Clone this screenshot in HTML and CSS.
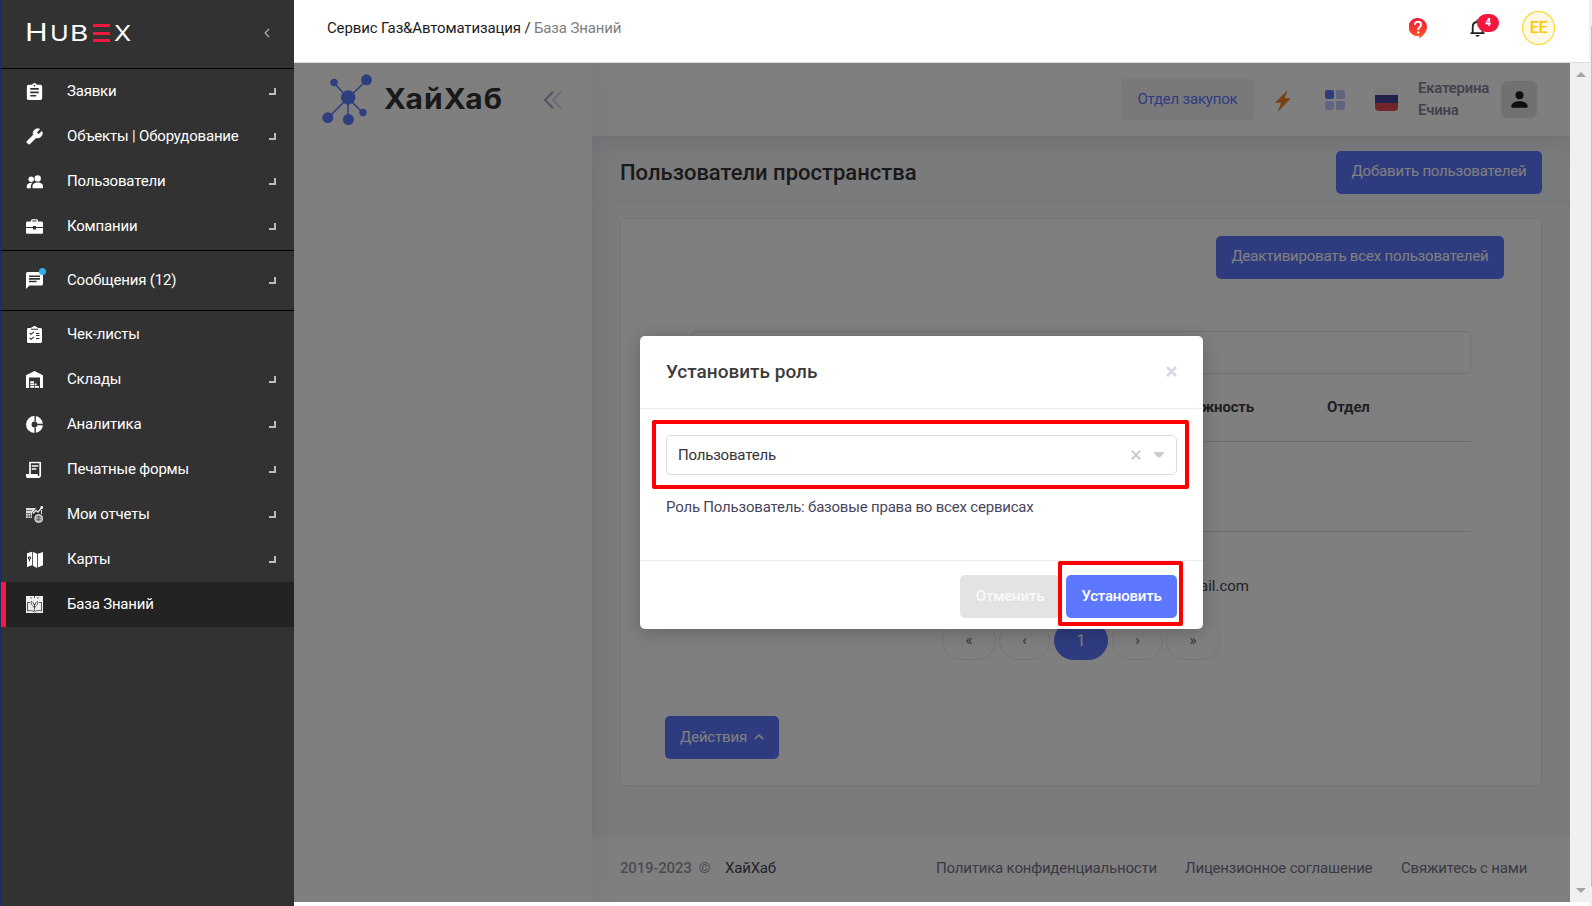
FILE: index.html
```html
<!DOCTYPE html>
<html lang="ru">
<head>
<meta charset="utf-8">
<title>База Знаний</title>
<link rel="stylesheet" href="styles.css">
</head>
<body>
<div class="app">
  <nav class="side">
    <div class="side-head">
      <div class="logo"><span class="logo-h">H</span><span class="logo-u">U</span><span class="logo-b">B</span><i class="logo-e"></i><span class="logo-x">X</span></div>
      <svg class="collapse" viewBox="0 0 6 10"><path d="M5 1L1.2 5L5 9" fill="none" stroke="#aaa" stroke-width="1.3"/></svg>
    </div>
    <div class="group">
      <a class="item"><svg class="ico" viewBox="3 1 18 20"><path fill="#fff" fill-rule="evenodd" d="M19 3h-4.2a3 3 0 0 0-5.6 0H5a2 2 0 0 0-2 2v14c0 1.100.9 2 2 2h14a2 2 0 0 0 2-2V5a2 2 0 0 0-2-2zm-7 0a1 1 0 1 1 0 2 1 1 0 0 1 0-2zm2 14H7v-2h7zm3-4H7v-2h10zm0-4H7V7h10z"/></svg><span>Заявки</span><i class="corner"></i></a>
      <a class="item"><svg class="ico" viewBox="0 1 24 22"><path fill="#fff" stroke="#fff" transform="matrix(-1 0 0 1 24 0)" d="M22.700 19l-9.100-9.100c.9-2.300.4-5-1.500-6.900-2-2-5-2.400-7.400-1.300L9 6 6 9 1.600 4.700C.4 7.100.9 10.100 2.900 12.100c1.900 1.900 4.600 2.400 6.900 1.500l9.100 9.100c.4.4 1 .4 1.400 0l2.300-2.300c.5-.4.5-1.100.1-1.400z"/></svg><span>Объекты | Оборудование</span><i class="corner"></i></a>
      <a class="item"><svg class="ico" viewBox="0 0 17 17"><g fill="#fff"><circle cx="11.700" cy="5.400" r="3.200"/><circle cx="5.200" cy="6.200" r="2.700"/><path d="M6.500 15.200v-2c0-2.500 2.500-3.700 5.200-3.700s5.300 1.200 5.300 3.700v2zM.8 15.200v-2.100c0-2.200 2-3.300 4.500-3.400h1.300c-1.300 1-1.800 2.300-1.800 3.800v1.700z"/></g></svg><span>Пользователи</span><i class="corner"></i></a>
      <a class="item"><svg class="ico" viewBox="0 0 17 17"><path fill="#fff" d="M5 3.500V2.200L6 1.200h5l1 1v1.300h4l1 1V9h-7V8H7v1H0V4.500l1-1zm1.300 0h4.400v-1H6.300zM0 10h7v1.500h3V10h7v5l-.8.800H.8L0 15z"/></svg><span>Компании</span><i class="corner"></i></a>
    </div>
    <div class="group message">
      <a class="item"><span class="ico-wrap"><svg class="ico" viewBox="2 2 20 20"><path fill="#fff" fill-rule="evenodd" d="M20 2H4a2 2 0 0 0-2 2v18l4-4h14a2 2 0 0 0 2-2V4a2 2 0 0 0-2-2zM5.500 6h13v1.800h-13zm0 3.200h13V11h-13zm0 3.200h9v1.800h-9z"/></svg><i class="dot"></i></span><span>Сообщения (12)</span><i class="corner"></i></a>
    </div>
    <div class="group last">
      <a class="item"><svg class="ico" viewBox="0 0 17 17"><path fill="#fff" d="M2 2h3.500V.9h1.300L7.500 0h2l.7.9h1.300V2H15l1 1v13l-1 1H2l-1-1V3z"/><path fill="none" stroke="#323232" stroke-width="1.100" d="M5 3.300h7M3.700 7l1.400 1.300L8 5.800M3.700 12l1.400 1.300L8 10.800M10 7.500h3.500M10 9.500h3.500M10 12.500h3.500"/></svg><span>Чек-листы</span></a>
      <a class="item"><svg class="ico" viewBox="0 0 17 17"><path fill="#fff" d="M0 17V4.300L8.500 0 17 4.300V17h-3V6.500H3V17z"/><path fill="#fff" d="M4.200 10.200H8v1.800H4.200zM4.200 12.600H8v1.700H4.200zM8.600 12.600h2v1.700h-2zM4.200 15H8v1.800H4.200zM8.600 15h4.400v1.800H8.600z"/></svg><span>Склады</span><i class="corner"></i></a>
      <a class="item"><svg class="ico" viewBox="0 0 17 17"><circle cx="8.500" cy="8.500" r="5.700" fill="none" stroke="#fff" stroke-width="5.500"/><path d="M9.200 0v5.500M9.200 11.500V17M11 8.500h6" stroke="#323232" stroke-width="1.400"/></svg><span>Аналитика</span><i class="corner"></i></a>
      <a class="item"><svg class="ico" viewBox="0 0 17 17"><path fill="none" stroke="#fff" stroke-width="1.700" d="M4 13V1.500h10.200v12.800c0 1.300-.8 1.900-1.700 1.900s-1.500-.7-1.500-2H1v.8c0 .8.500 1.200 1.300 1.200h10"/><path stroke="#fff" stroke-width="1.300" d="M5.800 5h6.500M5.800 8h4.500"/><path fill="#fff" d="M0 13.300h11V17H1.500L0 16z"/><path stroke="#323232" stroke-dasharray="1 1.500" d="M4 .4h11"/></svg><span>Печатные формы</span><i class="corner"></i></a>
      <a class="item"><svg class="ico" viewBox="0 0 17 17"><path fill="#ddd" d="M0 2h10L8 5 6 7v5H0z"/><path d="M0 4.500h6M0 7.500h5M0 10h6M2.300 8v4M4.500 8v4" stroke="#323232" stroke-width=".6"/><path d="M7 7.500L10 4.500l2 1.500 4-4.500" fill="none" stroke="#ddd" stroke-width="1.500"/><circle cx="15.800" cy="1.400" r="1.400" fill="#fff"/><path d="M15.500 4v4" stroke="#ddd"/><circle cx="12.700" cy="12.500" r="4" fill="#aaa" stroke="#ddd"/><path d="M10.500 11h4M10.500 13.500h4M12.700 10v5" stroke="#323232" stroke-width=".5"/></svg><span>Мои отчеты</span><i class="corner"></i></a>
      <a class="item"><svg class="ico" viewBox="0 0 17 17"><path fill="#fff" d="M1 2.200l5-1.500v13.500L1 16zM6.800.7L11 2.700V17l-4.200-2.300zM11.800 2.700L17 1v13.200L11.800 16.500z"/><circle cx="3.500" cy="7" r="1.100" fill="none" stroke="#323232" stroke-width="1.100"/><path d="M3.500 8v2.500" stroke="#323232"/></svg><span>Карты</span><i class="corner"></i></a>
      <a class="item active"><svg class="ico" viewBox="0 0 17 17"><path fill="#eee" d="M0 0h17v17H0z"/><path fill="none" stroke="#333" stroke-width=".8" d="M1.500 15V6.500h2.500M15.500 15V6.500h-2.500M1.500 15c2.500-1 5.500-.5 7 1 1.500-1.500 4.500-2 7-1M8.500 8v7M6.500 9.500C5 8 4.800 6.500 5.800 5M10.500 9.500C12 8 12.200 6.500 11.200 5M6.800 6l1.700 3.500L10.200 6M8.500 0v2M4.500 1l1 1.500M12.500 1l-1 1.500M6.800 10.800h3.400"/></svg><span>База Знаний</span></a>
    </div>
  </nav>

  <main class="main">
    <header class="top">
      <div class="crumbs">Сервис Газ&amp;Автоматизация / <span>База Знаний</span></div>
      <div class="top-tools">
        <svg class="help" viewBox="0 0 18 21"><defs><linearGradient id="hg" x1="0" y1="0" x2="0" y2="1"><stop offset="0" stop-color="#f0163f"/><stop offset="1" stop-color="#ff5a1f"/></linearGradient></defs><path fill="url(#hg)" d="M9 0a9 9 0 0 1 9 9c0 5-4 8.500-7.700 11.500V17.800A9 9 0 1 1 9 0z"/><path fill="none" stroke="#fff" stroke-width="2" d="M5.900 6.800C5.900 4.900 7.200 3.800 9 3.800s3.200 1.100 3.200 2.800C12.200 8.800 9.200 9 9.200 12"/><circle cx="9.200" cy="14.500" r="1.200" fill="#fff"/></svg>
        <div class="bell"><svg viewBox="0 0 16 18"><path fill="none" stroke="#222" stroke-width="1.800" d="M.5 14.200H14.500M2.700 14.500V8c0-3 2-5 4.800-5s5 2 5 5v6.500M7.500 3V.5"/><path fill="#222" d="M5.500 16h4c0 2.300-4 2.300-4 0z"/></svg><b class="count">4</b></div>
        <div class="me">EE</div>
      </div>
    </header>

    <div class="frame-row">
      <section class="frame">
        <aside class="aside">
          <svg class="net" viewBox="0 0 52 54"><g stroke="#5f7cff" stroke-width="1.600" fill="#5f7cff"><path d="M26 24L12 9M26 24L45 6M26 24L6 44M26 24V46M26 24L41 39"/><g stroke="none"><circle cx="26.200" cy="23.500" r="7.200"/><circle cx="12" cy="8.500" r="3.700"/><circle cx="44.500" cy="5.800" r="5.500"/><circle cx="5.800" cy="43.700" r="5.500"/><circle cx="26.400" cy="45.500" r="5.500"/><circle cx="41" cy="38.500" r="3.700"/></g></g></svg>
          <span class="brand">ХайХаб</span>
          <svg class="dbl" viewBox="0 0 20 18"><g fill="none" stroke-width="2.200"><path d="M10 1L2 9l8 8" stroke="#a5a8c4"/><path d="M18 1l-8 8 8 8" stroke="#d8daea"/></g></svg>
        </aside>
        <div class="content">
          <header class="bar">
            <a class="dept">Отдел закупок</a>
            <svg class="bolt" viewBox="0 0 16 22"><path fill="#f58220" d="M12.800 0L0 12.700h6L2.800 22 16 8.200H9.700z"/></svg>
            <svg class="tiles" viewBox="0 0 20 20"><rect width="9" height="9" rx="2" fill="#5d78ff"/><g fill="#bec9ff"><rect x="11" width="9" height="9" rx="2"/><rect y="11" width="9" height="9" rx="2"/><rect x="11" y="11" width="9" height="9" rx="2"/></g></svg>
            <div class="flag"></div>
            <div class="name">Екатерина<br>Ечина</div>
            <div class="user"><svg viewBox="0 0 17 17"><circle cx="8.500" cy="4.300" r="4" fill="#1a1a27"/><path fill="#1a1a27" d="M.3 15.500C.3 12 4 10.200 8.500 10.200s8.200 1.800 8.200 5.300c0 .9-.5 1.200-1.200 1.200h-14c-.7 0-1.200-.3-1.200-1.200z"/></svg></div>
          </header>
          <div class="sub"><h1>Пользователи пространства</h1><a class="btn add">Добавить пользователей</a></div>
          <div class="card">
            <a class="btn off">Деактивировать всех пользователей</a>
            <div class="search"></div>
            <div class="thead"><b class="th1">Должность</b><b class="th2">Отдел</b></div>
            <div class="row1"></div>
            <div class="row2"><span>@gmail.com</span></div>
            <div class="pages"><i>«</i><i class="nar">‹</i><i class="on">1</i><i class="nar">›</i><i>»</i></div>
            <a class="btn act">Действия <svg viewBox="0 0 10 6"><path d="M.7 5.200L5 1l4.300 4.200" fill="none" stroke="#fff" stroke-width="1.600"/></svg></a>
          </div>
          <footer class="foot"><span class="year">2019-2023 &nbsp;©</span><span class="hh">ХайХаб</span><span class="lnk l1">Политика конфиденциальности</span><span class="lnk l2">Лицензионное соглашение</span><span class="lnk l3">Свяжитесь с нами</span></footer>
        </div>
        <div class="shade"></div>
        <div class="modal">
          <div class="m-head"><h2>Установить роль</h2><svg viewBox="0 0 11 11"><path d="M1 1l9 9M10 1L1 10" stroke="#d8d9e2" stroke-width="2.700"/></svg></div>
          <div class="m-body">
            <div class="select"><span>Пользователь</span><svg class="clr" viewBox="0 0 10 10"><path d="M.8.8l8.400 8.400M9.200.8L.8 9.200" stroke="#ccc" stroke-width="2"/></svg><svg class="car" viewBox="0 0 10 6"><path fill="#ccc" d="M0 0h10v1L6 5.500H4L0 1z"/></svg></div>
            <p>Роль Пользователь: базовые права во всех сервисах</p>
          </div>
          <div class="m-foot"><a class="btn cancel">Отменить</a><a class="btn set">Установить</a></div>
          <i class="mark m1"></i><i class="mark m2"></i>
        </div>
      </section>
      <div class="scroll"><i class="up"></i><i class="down"></i></div>
    </div>
  </main>
  <div class="outer"><i></i></div>
</div>
</body>
</html>
```

FILE: styles.css
```css
* { box-sizing: border-box; }
body { margin: 0; font: 15px/22px Roboto, "Liberation Sans", sans-serif; letter-spacing: -.19px; background: #fff; overflow: hidden; }
svg { display: block; flex: none; }
i { font-style: normal; }
h1, h2, p { margin: 0; }
.app { display: flex; width: 1592px; height: 906px; position: relative; }

.side { width: 294px; flex: none; background: #323232; border-left: 1px solid #1c2c5c; color: #fff; }
.side-head { height: 69px; border-bottom: 1px solid #000; display: flex; align-items: center; justify-content: space-between; padding: 0 24px 2px 24px; }
.logo { display: flex; align-items: flex-end; height: 18px; font-family: Inter, sans-serif; line-height: 18px; letter-spacing: 0; }
.logo span { display: block; transform-origin: 0 50%; }
.logo-h { font-size: 24px; width: 25px; transform: scaleX(1.27); }
.logo-u, .logo-b, .logo-x { font-size: 21.500px; width: 20px; }
.logo-u { transform: scaleX(1.17); }
.logo-b { transform: scaleX(1.3); }
.logo-x { transform: scaleX(1.17); }
.logo-e { width: 17px; height: 18px; margin: 0 4px 0 3px; border-top: 3px solid #f0183f; border-bottom: 3px solid #f0183f; background: linear-gradient(#f0183f, #f0183f) 0 5px / 100% 3px no-repeat; }
.collapse { width: 6px; height: 10px; }
.group { border-bottom: 1px solid #000; padding-bottom: 1px; }
.group.message { padding: 7px 0; }
.group.last { border: 0; padding-top: 1px; }
.item { display: flex; align-items: center; height: 45px; padding-left: 25px; }
.item > span:not(.ico-wrap) { flex: 1; padding-bottom: 2px; }
.ico { width: 17px; height: 17px; margin-right: 24px; }
.ico-wrap { position: relative; }
.dot { position: absolute; left: 13px; top: -4px; width: 7px; height: 7px; border-radius: 50%; background: #2fb0ee; }
.corner { width: 7px; height: 7px; border: solid #bdbdbd; border-width: 0 2px 2px 0; margin-right: 18px; }
.active { background: #232323; border-left: 5px solid #f8173f; padding-left: 20px; }

.main { width: 1295px; flex: none; }
.top { height: 63px; border-bottom: 1px solid #dcdcdc; display: flex; justify-content: space-between; padding: 0 34px 6px 33px; align-items: center; color: #1c1c1c; }
.crumbs { letter-spacing: -.14px; }
.crumbs span { color: #808080; }
.top-tools { display: flex; align-items: center; }
.help { width: 18px; height: 21px; margin-right: 43px; }
.bell { position: relative; width: 16px; margin-right: 36px; }
.bell svg { width: 16px; height: 18px; }
.count { position: absolute; left: 7px; top: -5px; width: 22px; height: 18px; border-radius: 9px; background: #f0183f; color: #fff; font-size: 10px; line-height: 18px; text-align: center; }
.me { width: 33px; height: 34px; border: 1px solid #fbd21c; border-radius: 50%; background: #fff8e3; color: #facb05; line-height: 32px; text-align: center; font-weight: 500; font-size: 16px; }

.frame-row { display: flex; height: 839px; }
.frame { width: 1276px; display: flex; position: relative; overflow: hidden; flex: none; }
.aside { width: 298px; background: #fff; position: relative; z-index: 1; flex: none; box-shadow: 0 0 28px rgba(82,63,105,.1); display: flex; padding: 11px 0 0 28px; align-items: flex-start; }
.net { width: 52px; height: 54px; }
.brand { font: 700 28px/34px Inter, sans-serif; letter-spacing: 1px; transform: scaleX(1.07); transform-origin: 0 50%; color: #333; width: 159px; margin: 8px 0 0 10px; white-space: nowrap; }
.dbl { width: 20px; height: 18px; margin-top: 17px; }
.content { flex: 1; display: flex; flex-direction: column; background: #f4f6f9; }
.bar { height: 73px; background: #fff; box-shadow: 0 4px 26px rgba(82,63,105,.13); display: flex; align-items: center; padding: 0 33px 2px 0; justify-content: flex-end; position: relative; }
.dept { width: 133px; height: 41px; background: #f3f3f8; border-radius: 4px; color: #5d78ff; line-height: 41px; text-align: center; margin: 1px 21px 0 0; letter-spacing: -.2px; }
.bolt { width: 16px; height: 22px; margin: 4px 34px 0 0; }
.tiles { width: 20px; height: 20px; margin: 2px 30px 0 0; }
.flag { width: 23px; height: 23px; border-radius: 4px; background: linear-gradient(#f4f4f4 0 7px, #44449c 7px 15px, #e44c55 15px); margin: 2px 20px 0 0; }
.name { width: 83px; color: #85859a; font-weight: 600; letter-spacing: -.25px; }
.user { width: 36px; height: 37px; border-radius: 6px; background: #e2e2e2; display: flex; align-items: center; justify-content: center; margin-top: 1px; padding-top: 1px; }
.user svg { width: 17px; height: 17px; }
.sub { height: 66px; border-bottom: 1px solid #eaebef; display: flex; align-items: flex-start; justify-content: space-between; padding: 15px 28px 0 28px; }
.sub h1 { font-size: 22px; line-height: 43px; font-weight: 500; letter-spacing: 0; color: #333; }
.btn { display: inline-block; height: 43px; line-height: 40px; border-radius: 5px; background: #5d78ff; color: #fff; text-align: center; }
.add { width: 206px; }
.card { width: 922px; height: 568px; margin: 16px 0 0 28px; border: 1px solid #ebebef; border-radius: 5px; background: #fff; display: flex; flex-direction: column; align-items: flex-start; }
.off { width: 288px; margin: 17px 0 0 595px; }
.search { width: 780px; height: 43px; margin: 52px 0 0 70px; border: 1px solid #e2e3e6; border-radius: 5px; }
.thead { width: 780px; height: 68px; margin-left: 70px; border-bottom: 1px solid #d9dadd; display: flex; padding-top: 22px; color: #3f4047; letter-spacing: -.2px; }
.thead b { font-weight: 700; }
.th1 { margin-left: 483px; width: 153px; }
.row1 { width: 780px; height: 90px; margin-left: 70px; border-bottom: 1px solid #d9dadd; }
.row2 { width: 780px; height: 89px; margin-left: 70px; padding: 43px 0 0 471px; color: #48465b; letter-spacing: 0; }
.row2 span { width: 87px; display: flex; justify-content: flex-end; }
.pages { display: flex; gap: 3px; margin-left: 321px; color: #6d6a80; line-height: 37px; }
.pages i { width: 54px; height: 39px; border: 1px solid #ebebef; border-radius: 20px; text-align: center; }
.pages .nar { width: 51px; }
.pages .on { background: #5d78ff; border-color: #5d78ff; color: #fff; margin: 0 1px; font-size: 17px; }
.act { width: 114px; margin: 56px 0 0 44px; display: flex; justify-content: center; gap: 7px; line-height: 42px; }
.act svg { width: 10px; height: 6px; margin-top: 18px; }
.foot { height: 66px; margin-top: auto; background: #fff; display: flex; padding: 21px 0 0 28px; color: #74728a; white-space: nowrap; }
.year { width: 105px; color: #9a99a5; font-weight: 500; }
.hh { width: 211px; color: #48465b; }
.l1 { width: 249px; }
.l2 { width: 216px; }
.shade { position: absolute; inset: 0; z-index: 2; background: rgba(0,0,0,.5); }

.modal { position: absolute; z-index: 3; left: 346px; top: 273px; width: 563px; height: 293px; background: #fff; border-radius: 5px; box-shadow: 0 3px 18px rgba(0,0,0,.22); }
.m-head { height: 73px; border-bottom: 1px solid #ebedf2; display: flex; align-items: center; justify-content: space-between; padding: 0 26px 1px 26px; }
.m-head h2 { font-size: 19px; font-weight: 500; letter-spacing: 0; color: #3c3c3c; }
.m-head svg { width: 11px; height: 11px; }
.m-body { height: 152px; border-bottom: 1px solid #ebedf2; padding: 26px; color: #48465b; }
.select { height: 40px; border: 1px solid #dcdcde; border-radius: 5px; display: flex; align-items: center; padding: 0 12px 1px 11px; color: #333; }
.select span { flex: 1; }
.clr { width: 10px; height: 10px; margin: 1px 13px 0 0; }
.car { width: 10px; height: 6px; }
.m-body p { margin-top: 21px; letter-spacing: -.2px; }
.m-foot { display: flex; justify-content: flex-end; padding: 14px 26px 0 0; gap: 6px; line-height: 42px; }
.m-foot .btn { line-height: 42px; font-weight: 500; }
.cancel { width: 100px; background: #e3e3e3; color: #f9f9f9; }
.set { width: 111px; }
.mark { position: absolute; border: 4px solid #f00; border-radius: 2px; }
.m1 { left: 12px; top: 84px; width: 537px; height: 69px; }
.m2 { left: 418px; top: 225px; width: 125px; height: 65px; }

.scroll { width: 19px; background: #f0f0f0; display: flex; flex-direction: column; justify-content: space-between; align-items: center; padding: 9px 0 9px 2px; }
.up, .down { border: 5px solid transparent; }
.up { border-top: 0; border-bottom-color: #a3a3a3; }
.down { border-bottom: 0; border-top-color: #a3a3a3; }
.outer { width: 3px; background: #f0f0f0; padding: 26px 0 0 2px; }
.outer i { display: block; height: 861px; background: #c1c1c1; }
```
